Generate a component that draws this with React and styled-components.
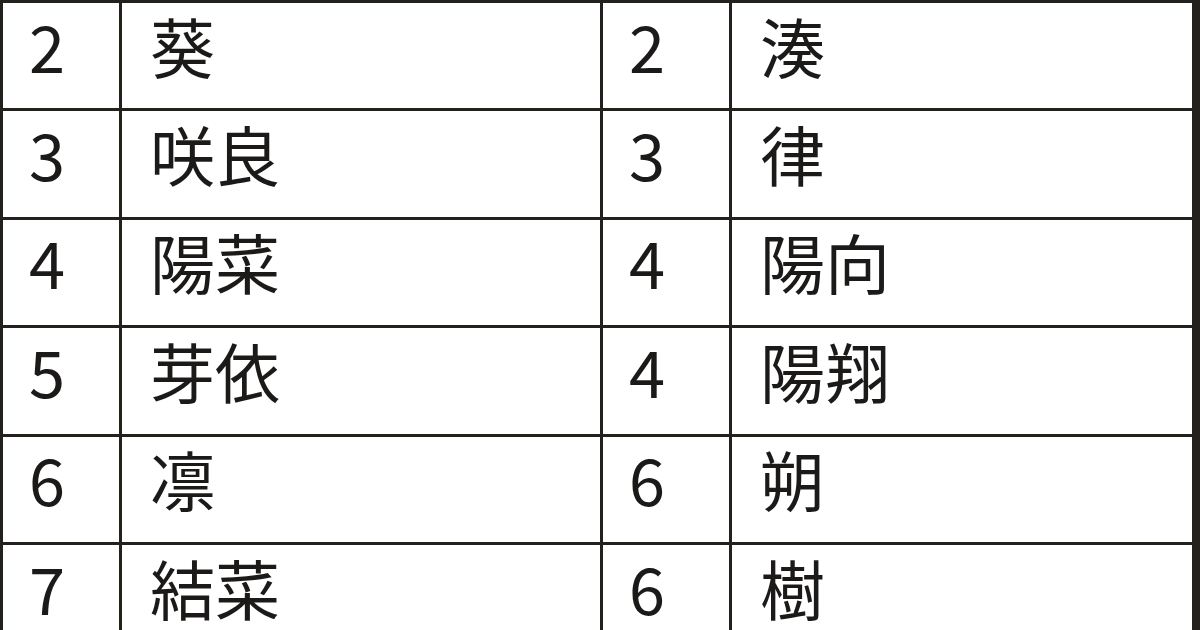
import React from 'react';
import styled, { createGlobalStyle } from 'styled-components';

const GlobalStyle = createGlobalStyle`
  html, body {
    margin: 0;
    padding: 0;
    background: #ffffff;
    overflow: hidden;
  }
`;

const Page = styled.div`
  width: 1200px;
  height: 630px;
  overflow: hidden;
`;

const Table = styled.div`
  display: grid;
  grid-template-columns: 116px 478px 126px 460px;
  grid-auto-rows: 105.4px;
  gap: 3px;
  padding: 3px 7px 0 3px;
  width: 1200px;
  box-sizing: border-box;
  background: #24201c;
`;

const Cell = styled.div`
  background: #ffffff;
  display: flex;
  align-items: center;
  padding-left: ${({ $num }) => ($num ? '26px' : '28px')};
  padding-bottom: 22px;
  box-sizing: border-box;
  font-family: "Noto Sans CJK JP", "Noto Sans", sans-serif;
  font-size: 65px;
  line-height: 1.2;
  color: #1c1a18;
`;

const rows = [
  ['2', '葵', '2', '湊'],
  ['3', '咲良', '3', '律'],
  ['4', '陽菜', '4', '陽向'],
  ['5', '芽依', '4', '陽翔'],
  ['6', '凛', '6', '朔'],
  ['7', '結菜', '6', '樹'],
];

export default function App() {
  return (
    <>
      <GlobalStyle />
      <Page>
        <Table>
          {rows.map((r, i) => (
            <React.Fragment key={i}>
              <Cell $num>{r[0]}</Cell>
              <Cell>{r[1]}</Cell>
              <Cell $num>{r[2]}</Cell>
              <Cell>{r[3]}</Cell>
            </React.Fragment>
          ))}
        </Table>
      </Page>
    </>
  );
}
